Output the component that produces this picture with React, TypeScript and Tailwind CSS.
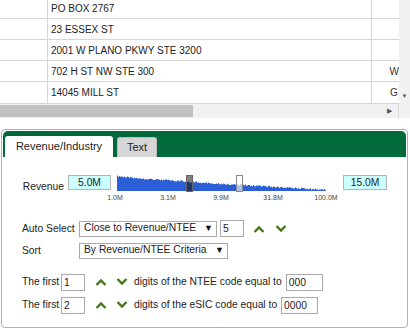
import React from "react";

const ROWS: [string, string][] = [
  ["PO BOX 2767", ""],
  ["23 ESSEX ST", ""],
  ["2001 W PLANO PKWY STE 3200", ""],
  ["702 H ST NW STE 300", "W"],
  ["14045 MILL ST", "G"],
];

const TICKS = [
  { label: "1.0M", x: -2 },
  { label: "3.1M", x: 51 },
  { label: "9.9M", x: 104 },
  { label: "31.8M", x: 156 },
  { label: "100.0M", x: 209 },
];

const Chevron: React.FC<{ up?: boolean }> = ({ up }) => (
  <svg width="12" height="8" viewBox="0 0 12 8" className="shrink-0">
    <polyline
      points={up ? "1.5,7 6,2.5 10.5,7" : "1.5,1 6,5.5 10.5,1"}
      fill="none"
      stroke="#48761c"
      strokeWidth="2.4"
    />
  </svg>
);

const Box: React.FC<{ value: string; w: string; className?: string }> = ({ value, w, className }) => (
  <div className={`${w} h-[17px] border border-[#a9a9a9] bg-white px-[2px] leading-[15px] ${className ?? ""}`}>{value}</div>
);

const Select: React.FC<{ value: string; w: string }> = ({ value, w }) => (
  <div className={`${w} h-[16px] border border-[#a9a9a9] bg-white flex items-center justify-between pl-[4px] pr-[3px] leading-none`}>
    <span>{value}</span>
    <span className="text-[9px] text-[#111]">▼</span>
  </div>
);

function barPath() {
  let d = "";
  for (let i = 0; i < 209; i++) {
    const t = i / 208;
    const base = 15.5 - 13.5 * Math.pow(t, 0.85);
    const r = Math.abs((Math.sin(i * 12.9898) * 43758.5453) % 1);
    const h = Math.max(1, base - r * 1.6);
    d += `M${i} 16V${(16 - h).toFixed(1)}h1V16z`;
  }
  return d;
}

const Histogram: React.FC = () => (
  <div className="relative w-[211px] h-[27px] ml-[4px]">
    <svg width="211" height="18" className="absolute left-0 top-0">
      <path d={barPath()} fill="#2c5ed6" transform="translate(2,0)" />
      <rect x="71.5" y="0.5" width="6" height="16" fill="rgba(20,20,20,0.55)" stroke="#666" />
      <rect x="121.5" y="0.5" width="6" height="16" fill="rgba(255,255,255,0.6)" stroke="#888" />
    </svg>
    {TICKS.map((t) => (
      <span
        key={t.label}
        className="absolute top-[19px] -translate-x-1/2 text-[7px] leading-none text-[#444]"
        style={{ left: t.x + 2 }}
      >
        {t.label}
      </span>
    ))}
  </div>
);

export default function App() {
  const chart = React.useMemo(() => <Histogram />, []);
  return (
    <div className="w-[410px] h-[334px] bg-white overflow-hidden font-['Liberation_Sans',Arial,sans-serif] text-[#222]">
      {/* grid */}
      <div className="h-[118px] flex flex-col">
        <div className="flex h-[104px]">
          <div className="w-[399px] overflow-hidden border-b border-[#d6d6d6]">
            <div className="-mt-[2px]">
              {ROWS.map(([addr, city]) => (
                <div key={addr} className="flex h-[21px] border-b border-[#d6d6d6] text-[10px] last:border-b-0">
                  <div className="w-[48px] border-r border-[#d6d6d6]" />
                  <div className="w-[324px] border-r border-[#d6d6d6] pl-[3px] flex items-center">{addr}</div>
                  <div className="flex-1 pl-[18px] flex items-center text-[#333]">{city}</div>
                </div>
              ))}
            </div>
          </div>
          <div className="w-[11px] bg-[#f1f1f1] flex flex-col justify-end items-center pb-[5px]">
            <span className="text-[6px] text-[#555] leading-none">▼</span>
          </div>
        </div>
        <div className="flex h-[14px] bg-[#f1f1f1]">
          <div className="w-[399px] flex items-center border-r border-[#dcdcdc]">
            <div className="w-[193px] h-[12px] bg-[#c1c1c1]" />
            <div className="flex-1" />
            <span className="text-[7px] text-[#555] mr-[6px]">▶</span>
          </div>
          <div className="flex-1" />
        </div>
      </div>

      {/* panel */}
      <div className="mt-[11px] ml-[1px] w-[407px] h-[199px] border border-[#b0b0b0] rounded-[4px] p-[1px]">
        <div className="h-[26px] bg-[#006a3b] rounded-[5px] rounded-b-none flex items-end gap-[4px] pl-[2px]">
          <div className="w-[108px] h-[21px] bg-white rounded-t-[3px] text-[11px] flex items-center justify-center">
            Revenue/Industry
          </div>
          <div className="w-[40px] h-[20px] bg-[#d6d6d6] border border-[#bbb] border-b-0 rounded-t-[3px] text-[11px] flex items-center justify-center">
            Text
          </div>
        </div>

        <div className="text-[10.3px]">
          <div className="flex items-start pt-[18px] h-[62px]">
            <span className="w-[61px] text-right mt-[4px]">Revenue</span>
            <div className="ml-[4px] w-[43px] h-[15px] border border-[#b5b5b5] bg-[#ccffff] text-center leading-[13px]">5.0M</div>
            {chart}
            <div className="ml-[17px] w-[44px] h-[15px] border border-[#b5b5b5] bg-[#ccffff] text-center leading-[13px]">15.0M</div>
          </div>

          <div className="flex items-center pl-[19px] gap-[3px] h-[19px]">
            <span className="w-[54px]">Auto Select</span>
            <Select value="Close to Revenue/NTEE" w="w-[138px]" />
            <Box value="5" w="w-[24px]" />
            <div className="ml-[6px] flex gap-[10px]">
              <Chevron up />
              <Chevron />
            </div>
          </div>
          <div className="flex items-center pl-[19px] gap-[3px] h-[19px] mt-[3px]">
            <span className="w-[54px]">Sort</span>
            <Select value="By Revenue/NTEE Criteria" w="w-[149px]" />
          </div>

          <div className="flex items-center pl-[19px] h-[18px] mt-[13px]">
            <span className="w-[39px]">The first</span>
            <Box value="1" w="w-[24px]" />
            <div className="ml-[10px] flex gap-[9px]">
              <Chevron up />
              <Chevron />
            </div>
            <span className="ml-[6px]">digits of the NTEE code equal to</span>
            <Box value="000" w="w-[37px]" className="ml-[4px]" />
          </div>
          <div className="flex items-center pl-[19px] h-[18px] mt-[5px]">
            <span className="w-[39px]">The first</span>
            <Box value="2" w="w-[24px]" />
            <div className="ml-[10px] flex gap-[9px]">
              <Chevron up />
              <Chevron />
            </div>
            <span className="ml-[6px]">digits of the eSIC code equal to</span>
            <Box value="0000" w="w-[37px]" className="ml-[4px]" />
          </div>
        </div>
      </div>
    </div>
  );
}
